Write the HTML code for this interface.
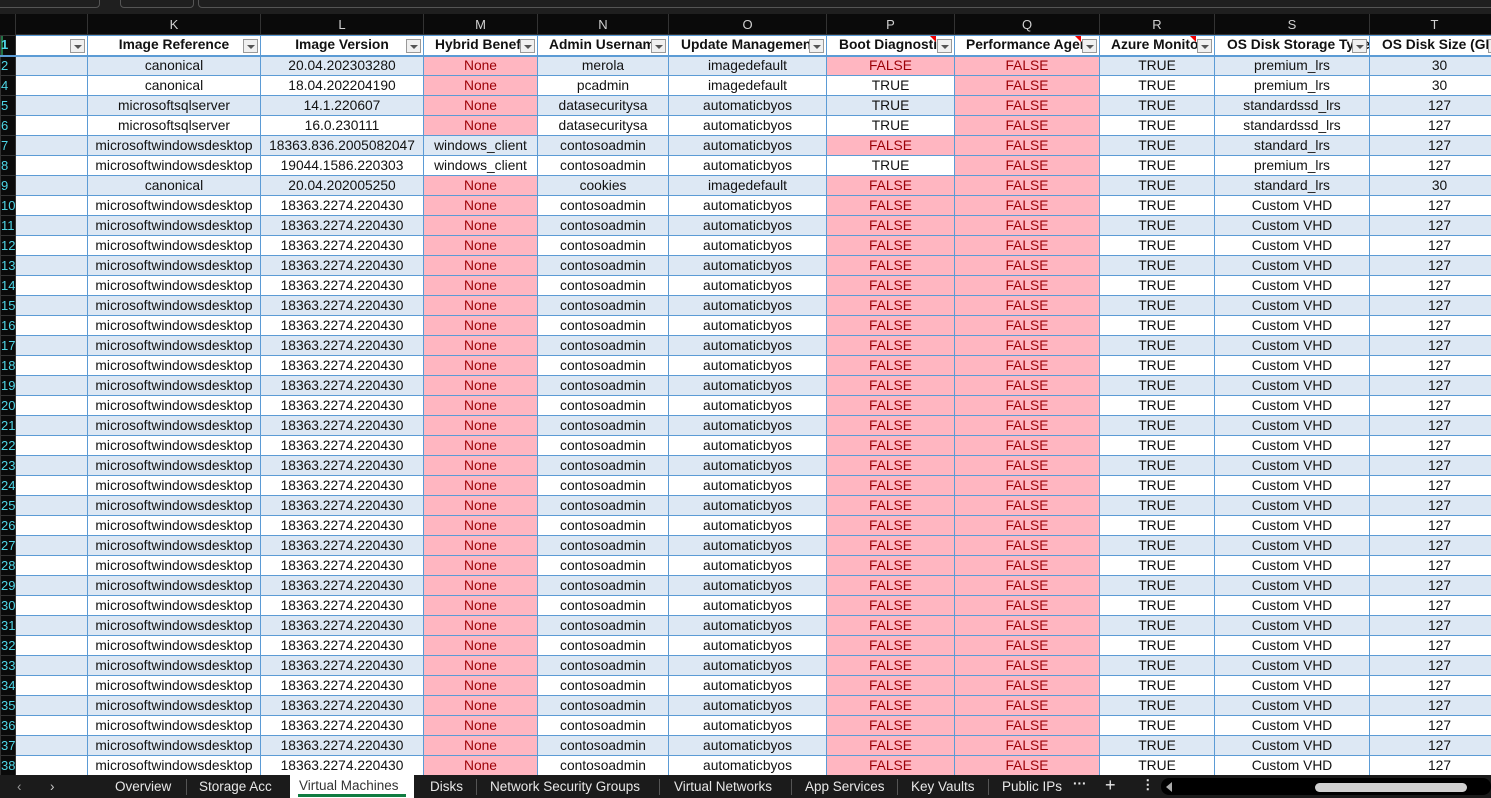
<!DOCTYPE html>
<html><head><meta charset="utf-8"><style>
*{margin:0;padding:0;box-sizing:border-box}
body{width:1491px;height:798px;overflow:hidden;background:#0a0a0a;font-family:"Liberation Sans",sans-serif;position:relative}
#top{position:absolute;left:0;top:0;width:1491px;height:14px;background:#1f1f1f}
#top .b{position:absolute;top:-6px;height:14px;border:1px solid #555;border-radius:4px}
#cols{position:absolute;left:0;top:14px;height:21px;width:1491px;background:#0a0a0a;border-bottom:1px solid #333}
#cols div{position:absolute;top:0;height:21px;line-height:21px;text-align:center;color:#d0d0d0;font-size:13px;border-right:1px solid #333}
table{position:absolute;left:0;top:35px;border-collapse:collapse;table-layout:fixed;width:1509px}
td{height:20px;border:1px solid #5b9bd5;font-size:13.8px;text-align:center;white-space:nowrap;overflow:hidden;color:#111;padding:0 1px;line-height:18px}
td.n{background:#0a0a0a;color:#4fd6e6;border:1px solid #333;text-align:left;padding:0;font-size:13px}
tr.h td{background:#fff;font-weight:bold;position:relative;border-bottom:2px solid #5b9bd5}
tr.h td.n{background:#0a0a0a;box-shadow:inset 2px 0 #217346}
.f{position:absolute;right:2px;top:3px;width:15px;height:14px;border:1px solid #999;background:#f0f0f0}
.f:after{content:"";position:absolute;left:3px;top:5px;border-left:4px solid transparent;border-right:4px solid transparent;border-top:4px solid #555}
.t{position:absolute;right:0;top:0;border-left:6px solid transparent;border-top:6px solid #e00}
tr.b td{background:#dde8f4}
tr.w td{background:#fff}
tr.b td.p,tr.w td.p{background:#ffb6c1;color:#9c0006}
tr.b td.n,tr.w td.n{background:#0a0a0a}
#bar{position:absolute;left:0;top:775px;width:1491px;height:23px;background:#1b1b1b;color:#e8e8e8;font-size:13.5px}
#bar span{position:absolute;top:4px}
#bar .s{position:absolute;top:4px;width:1px;height:16px;background:#555}
#act{position:absolute;left:290px;top:0;width:124px;height:23px;background:#fff;color:#333}
#act:after{content:"";position:absolute;left:8px;right:8px;bottom:1px;height:3px;background:#107c41}
</style></head><body>
<div id="top"><div class="b" style="left:-5px;width:105px"></div><div class="b" style="left:120px;width:74px"></div><div class="b" style="left:198px;width:1300px"></div></div>
<div id="cols">
<div style="left:0;width:16px;background:#0a0a0a"></div>
<div style="left:16px;width:72px"></div>
<div style="left:88px;width:173px">K</div>
<div style="left:261px;width:163px">L</div>
<div style="left:424px;width:114px">M</div>
<div style="left:538px;width:131px">N</div>
<div style="left:669px;width:158px">O</div>
<div style="left:827px;width:128px">P</div>
<div style="left:955px;width:145px">Q</div>
<div style="left:1100px;width:115px">R</div>
<div style="left:1215px;width:155px">S</div>
<div style="left:1370px;width:130px">T</div>
</div>
<table>
<colgroup><col style="width:15px"><col style="width:72px"><col style="width:173px"><col style="width:163px"><col style="width:114px"><col style="width:131px"><col style="width:158px"><col style="width:128px"><col style="width:145px"><col style="width:115px"><col style="width:155px"><col style="width:140px"></colgroup>
<tr class="h"><td class="n">1</td><td><i class="f"></i></td><td>Image Reference<i class="f"></i></td><td>Image Version<i class="f"></i></td><td style="text-align:left;padding-left:11px">Hybrid Benefi<i class="f"></i></td><td style="text-align:left;padding-left:11px">Admin Usernam<i class="f"></i></td><td style="text-align:left;padding-left:12px">Update Managemen<i class="f"></i></td><td style="text-align:left;padding-left:12px">Boot Diagnostic<i class="t" style="right:18px"></i><i class="f"></i></td><td style="text-align:left;padding-left:11px">Performance Agen<i class="t" style="right:18px"></i><i class="f"></i></td><td style="text-align:left;padding-left:11px">Azure Monito<i class="t" style="right:18px"></i><i class="f"></i></td><td style="text-align:left;padding-left:12px">OS Disk Storage Type<i class="f"></i></td><td style="text-align:left;padding-left:12px">OS Disk Size (GB)<i class="f" style="right:auto;left:118px"></i></td></tr>
<tr class="b"><td class="n">2</td><td></td><td>canonical</td><td>20.04.202303280</td><td class="p">None</td><td>merola</td><td>imagedefault</td><td class="p">FALSE</td><td class="p">FALSE</td><td>TRUE</td><td>premium_lrs</td><td>30</td></tr>
<tr class="w"><td class="n">4</td><td></td><td>canonical</td><td>18.04.202204190</td><td class="p">None</td><td>pcadmin</td><td>imagedefault</td><td>TRUE</td><td class="p">FALSE</td><td>TRUE</td><td>premium_lrs</td><td>30</td></tr>
<tr class="b"><td class="n">5</td><td></td><td>microsoftsqlserver</td><td>14.1.220607</td><td class="p">None</td><td>datasecuritysa</td><td>automaticbyos</td><td>TRUE</td><td class="p">FALSE</td><td>TRUE</td><td>standardssd_lrs</td><td>127</td></tr>
<tr class="w"><td class="n">6</td><td></td><td>microsoftsqlserver</td><td>16.0.230111</td><td class="p">None</td><td>datasecuritysa</td><td>automaticbyos</td><td>TRUE</td><td class="p">FALSE</td><td>TRUE</td><td>standardssd_lrs</td><td>127</td></tr>
<tr class="b"><td class="n">7</td><td></td><td>microsoftwindowsdesktop</td><td>18363.836.2005082047</td><td>windows_client</td><td>contosoadmin</td><td>automaticbyos</td><td class="p">FALSE</td><td class="p">FALSE</td><td>TRUE</td><td>standard_lrs</td><td>127</td></tr>
<tr class="w"><td class="n">8</td><td></td><td>microsoftwindowsdesktop</td><td>19044.1586.220303</td><td>windows_client</td><td>contosoadmin</td><td>automaticbyos</td><td>TRUE</td><td class="p">FALSE</td><td>TRUE</td><td>premium_lrs</td><td>127</td></tr>
<tr class="b"><td class="n">9</td><td></td><td>canonical</td><td>20.04.202005250</td><td class="p">None</td><td>cookies</td><td>imagedefault</td><td class="p">FALSE</td><td class="p">FALSE</td><td>TRUE</td><td>standard_lrs</td><td>30</td></tr>
<tr class="w"><td class="n">10</td><td></td><td>microsoftwindowsdesktop</td><td>18363.2274.220430</td><td class="p">None</td><td>contosoadmin</td><td>automaticbyos</td><td class="p">FALSE</td><td class="p">FALSE</td><td>TRUE</td><td>Custom VHD</td><td>127</td></tr>
<tr class="b"><td class="n">11</td><td></td><td>microsoftwindowsdesktop</td><td>18363.2274.220430</td><td class="p">None</td><td>contosoadmin</td><td>automaticbyos</td><td class="p">FALSE</td><td class="p">FALSE</td><td>TRUE</td><td>Custom VHD</td><td>127</td></tr>
<tr class="w"><td class="n">12</td><td></td><td>microsoftwindowsdesktop</td><td>18363.2274.220430</td><td class="p">None</td><td>contosoadmin</td><td>automaticbyos</td><td class="p">FALSE</td><td class="p">FALSE</td><td>TRUE</td><td>Custom VHD</td><td>127</td></tr>
<tr class="b"><td class="n">13</td><td></td><td>microsoftwindowsdesktop</td><td>18363.2274.220430</td><td class="p">None</td><td>contosoadmin</td><td>automaticbyos</td><td class="p">FALSE</td><td class="p">FALSE</td><td>TRUE</td><td>Custom VHD</td><td>127</td></tr>
<tr class="w"><td class="n">14</td><td></td><td>microsoftwindowsdesktop</td><td>18363.2274.220430</td><td class="p">None</td><td>contosoadmin</td><td>automaticbyos</td><td class="p">FALSE</td><td class="p">FALSE</td><td>TRUE</td><td>Custom VHD</td><td>127</td></tr>
<tr class="b"><td class="n">15</td><td></td><td>microsoftwindowsdesktop</td><td>18363.2274.220430</td><td class="p">None</td><td>contosoadmin</td><td>automaticbyos</td><td class="p">FALSE</td><td class="p">FALSE</td><td>TRUE</td><td>Custom VHD</td><td>127</td></tr>
<tr class="w"><td class="n">16</td><td></td><td>microsoftwindowsdesktop</td><td>18363.2274.220430</td><td class="p">None</td><td>contosoadmin</td><td>automaticbyos</td><td class="p">FALSE</td><td class="p">FALSE</td><td>TRUE</td><td>Custom VHD</td><td>127</td></tr>
<tr class="b"><td class="n">17</td><td></td><td>microsoftwindowsdesktop</td><td>18363.2274.220430</td><td class="p">None</td><td>contosoadmin</td><td>automaticbyos</td><td class="p">FALSE</td><td class="p">FALSE</td><td>TRUE</td><td>Custom VHD</td><td>127</td></tr>
<tr class="w"><td class="n">18</td><td></td><td>microsoftwindowsdesktop</td><td>18363.2274.220430</td><td class="p">None</td><td>contosoadmin</td><td>automaticbyos</td><td class="p">FALSE</td><td class="p">FALSE</td><td>TRUE</td><td>Custom VHD</td><td>127</td></tr>
<tr class="b"><td class="n">19</td><td></td><td>microsoftwindowsdesktop</td><td>18363.2274.220430</td><td class="p">None</td><td>contosoadmin</td><td>automaticbyos</td><td class="p">FALSE</td><td class="p">FALSE</td><td>TRUE</td><td>Custom VHD</td><td>127</td></tr>
<tr class="w"><td class="n">20</td><td></td><td>microsoftwindowsdesktop</td><td>18363.2274.220430</td><td class="p">None</td><td>contosoadmin</td><td>automaticbyos</td><td class="p">FALSE</td><td class="p">FALSE</td><td>TRUE</td><td>Custom VHD</td><td>127</td></tr>
<tr class="b"><td class="n">21</td><td></td><td>microsoftwindowsdesktop</td><td>18363.2274.220430</td><td class="p">None</td><td>contosoadmin</td><td>automaticbyos</td><td class="p">FALSE</td><td class="p">FALSE</td><td>TRUE</td><td>Custom VHD</td><td>127</td></tr>
<tr class="w"><td class="n">22</td><td></td><td>microsoftwindowsdesktop</td><td>18363.2274.220430</td><td class="p">None</td><td>contosoadmin</td><td>automaticbyos</td><td class="p">FALSE</td><td class="p">FALSE</td><td>TRUE</td><td>Custom VHD</td><td>127</td></tr>
<tr class="b"><td class="n">23</td><td></td><td>microsoftwindowsdesktop</td><td>18363.2274.220430</td><td class="p">None</td><td>contosoadmin</td><td>automaticbyos</td><td class="p">FALSE</td><td class="p">FALSE</td><td>TRUE</td><td>Custom VHD</td><td>127</td></tr>
<tr class="w"><td class="n">24</td><td></td><td>microsoftwindowsdesktop</td><td>18363.2274.220430</td><td class="p">None</td><td>contosoadmin</td><td>automaticbyos</td><td class="p">FALSE</td><td class="p">FALSE</td><td>TRUE</td><td>Custom VHD</td><td>127</td></tr>
<tr class="b"><td class="n">25</td><td></td><td>microsoftwindowsdesktop</td><td>18363.2274.220430</td><td class="p">None</td><td>contosoadmin</td><td>automaticbyos</td><td class="p">FALSE</td><td class="p">FALSE</td><td>TRUE</td><td>Custom VHD</td><td>127</td></tr>
<tr class="w"><td class="n">26</td><td></td><td>microsoftwindowsdesktop</td><td>18363.2274.220430</td><td class="p">None</td><td>contosoadmin</td><td>automaticbyos</td><td class="p">FALSE</td><td class="p">FALSE</td><td>TRUE</td><td>Custom VHD</td><td>127</td></tr>
<tr class="b"><td class="n">27</td><td></td><td>microsoftwindowsdesktop</td><td>18363.2274.220430</td><td class="p">None</td><td>contosoadmin</td><td>automaticbyos</td><td class="p">FALSE</td><td class="p">FALSE</td><td>TRUE</td><td>Custom VHD</td><td>127</td></tr>
<tr class="w"><td class="n">28</td><td></td><td>microsoftwindowsdesktop</td><td>18363.2274.220430</td><td class="p">None</td><td>contosoadmin</td><td>automaticbyos</td><td class="p">FALSE</td><td class="p">FALSE</td><td>TRUE</td><td>Custom VHD</td><td>127</td></tr>
<tr class="b"><td class="n">29</td><td></td><td>microsoftwindowsdesktop</td><td>18363.2274.220430</td><td class="p">None</td><td>contosoadmin</td><td>automaticbyos</td><td class="p">FALSE</td><td class="p">FALSE</td><td>TRUE</td><td>Custom VHD</td><td>127</td></tr>
<tr class="w"><td class="n">30</td><td></td><td>microsoftwindowsdesktop</td><td>18363.2274.220430</td><td class="p">None</td><td>contosoadmin</td><td>automaticbyos</td><td class="p">FALSE</td><td class="p">FALSE</td><td>TRUE</td><td>Custom VHD</td><td>127</td></tr>
<tr class="b"><td class="n">31</td><td></td><td>microsoftwindowsdesktop</td><td>18363.2274.220430</td><td class="p">None</td><td>contosoadmin</td><td>automaticbyos</td><td class="p">FALSE</td><td class="p">FALSE</td><td>TRUE</td><td>Custom VHD</td><td>127</td></tr>
<tr class="w"><td class="n">32</td><td></td><td>microsoftwindowsdesktop</td><td>18363.2274.220430</td><td class="p">None</td><td>contosoadmin</td><td>automaticbyos</td><td class="p">FALSE</td><td class="p">FALSE</td><td>TRUE</td><td>Custom VHD</td><td>127</td></tr>
<tr class="b"><td class="n">33</td><td></td><td>microsoftwindowsdesktop</td><td>18363.2274.220430</td><td class="p">None</td><td>contosoadmin</td><td>automaticbyos</td><td class="p">FALSE</td><td class="p">FALSE</td><td>TRUE</td><td>Custom VHD</td><td>127</td></tr>
<tr class="w"><td class="n">34</td><td></td><td>microsoftwindowsdesktop</td><td>18363.2274.220430</td><td class="p">None</td><td>contosoadmin</td><td>automaticbyos</td><td class="p">FALSE</td><td class="p">FALSE</td><td>TRUE</td><td>Custom VHD</td><td>127</td></tr>
<tr class="b"><td class="n">35</td><td></td><td>microsoftwindowsdesktop</td><td>18363.2274.220430</td><td class="p">None</td><td>contosoadmin</td><td>automaticbyos</td><td class="p">FALSE</td><td class="p">FALSE</td><td>TRUE</td><td>Custom VHD</td><td>127</td></tr>
<tr class="w"><td class="n">36</td><td></td><td>microsoftwindowsdesktop</td><td>18363.2274.220430</td><td class="p">None</td><td>contosoadmin</td><td>automaticbyos</td><td class="p">FALSE</td><td class="p">FALSE</td><td>TRUE</td><td>Custom VHD</td><td>127</td></tr>
<tr class="b"><td class="n">37</td><td></td><td>microsoftwindowsdesktop</td><td>18363.2274.220430</td><td class="p">None</td><td>contosoadmin</td><td>automaticbyos</td><td class="p">FALSE</td><td class="p">FALSE</td><td>TRUE</td><td>Custom VHD</td><td>127</td></tr>
<tr class="w"><td class="n">38</td><td></td><td>microsoftwindowsdesktop</td><td>18363.2274.220430</td><td class="p">None</td><td>contosoadmin</td><td>automaticbyos</td><td class="p">FALSE</td><td class="p">FALSE</td><td>TRUE</td><td>Custom VHD</td><td>127</td></tr>
</table>
<div id="bar">
<span style="left:17px;color:#999">&lsaquo;</span><span style="left:50px;color:#ccc">&rsaquo;</span>
<span style="left:115px">Overview</span><i class="s" style="left:186px"></i>
<span style="left:199px">Storage Acc</span>
<div id="act"><span style="left:9px;top:3px">Virtual Machines</span></div>
<span style="left:430px">Disks</span><i class="s" style="left:476px"></i>
<span style="left:490px">Network Security Groups</span><i class="s" style="left:659px"></i>
<span style="left:674px">Virtual Networks</span><i class="s" style="left:791px"></i>
<span style="left:805px">App Services</span><i class="s" style="left:897px"></i>
<span style="left:911px">Key Vaults</span><i class="s" style="left:988px"></i>
<span style="left:1002px">Public IPs</span>
<span style="left:1073px;top:1px;font-weight:bold">&middot;&middot;&middot;</span>
<span style="left:1105px;top:0;font-size:18px">+</span>
<span style="left:1141px;top:2px;font-weight:bold">&#8942;</span>
<div style="position:absolute;left:1161px;top:3px;width:330px;height:17px;background:#000;border-radius:8px"></div>
<div style="position:absolute;left:1166px;top:7px;border-right:6px solid #aaa;border-top:5px solid transparent;border-bottom:5px solid transparent"></div>
<div style="position:absolute;left:1315px;top:8px;width:152px;height:9px;background:#d0d0d0;border-radius:5px"></div>
</div>
</body></html>
